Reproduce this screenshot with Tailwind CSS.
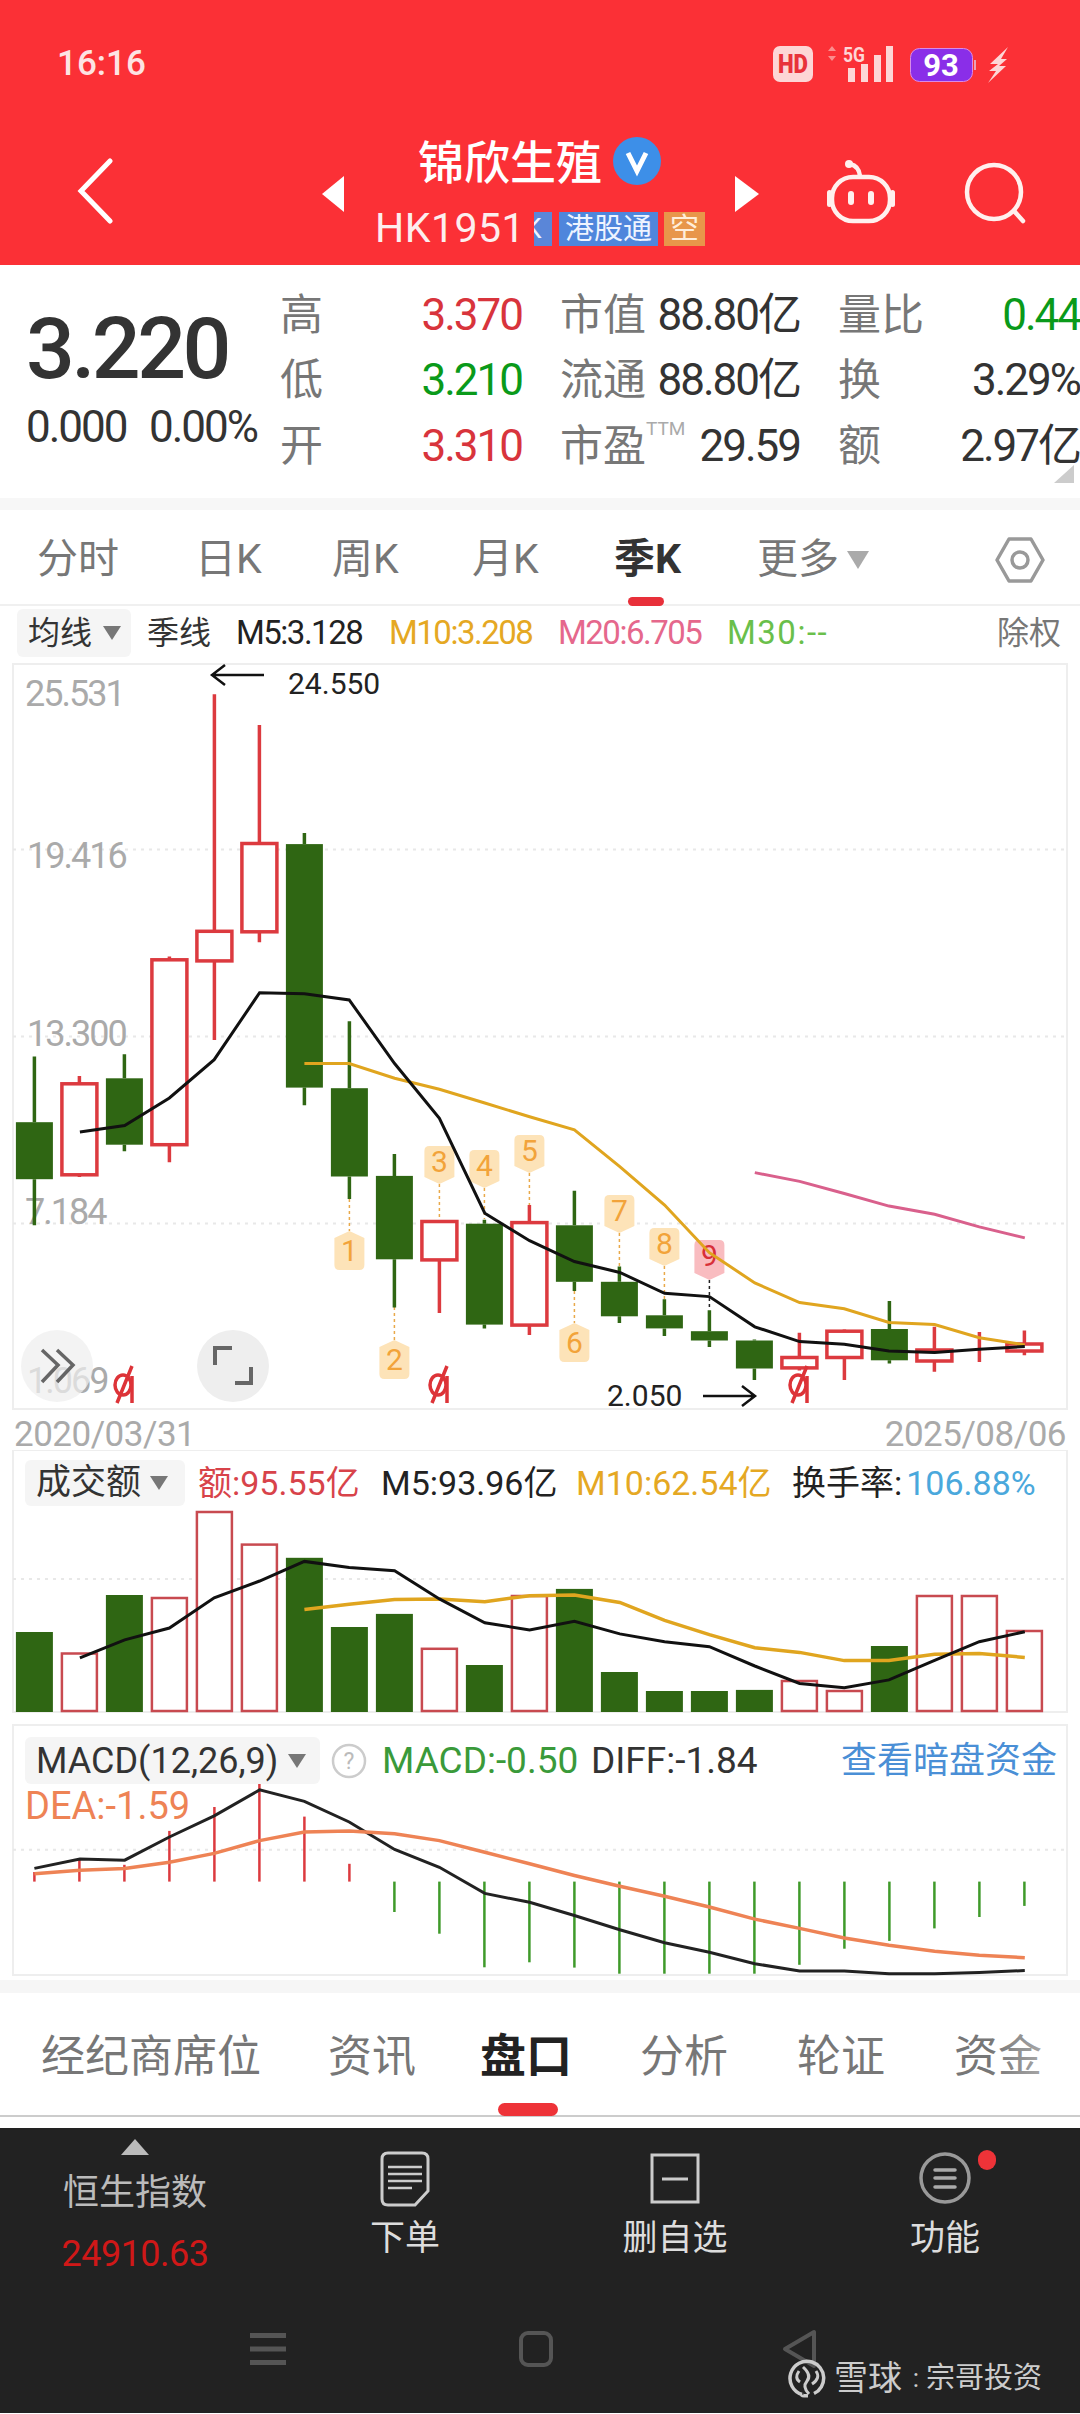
<!DOCTYPE html>
<html lang="en">
<head>
    <meta charset="UTF-8">
    <title>锦欣生殖 HK1951</title>
    <script src="https://cdn.jsdelivr.net/npm/@tailwindcss/browser@4"></script>
</head>
<body class="w-[1080px] h-[2414px] overflow-hidden bg-white text-[#333] font-['Roboto','Noto_Sans_CJK_SC',sans-serif]">

    <!-- Red header -->
    <header class="h-[265px] bg-[#fb3036] text-white">
        <div class="h-[128px] flex items-center">
            <span class="ml-[57px] text-[35px] font-medium text-[#fde3e3]">16:16</span>
            <svg class="ml-auto mr-[67px]" width="240" height="48" viewBox="773 40 240 48">
                <rect x="773" y="46" width="40" height="36" rx="7" fill="#fdd6d6"/>
                <text x="793" y="73" text-anchor="middle" font-size="25" font-weight="900" fill="#e8323a" textLength="30" lengthAdjust="spacingAndGlyphs">HD</text>
                <path d="M832 46l4 5h-8zM832 61l4-5h-8z" fill="#fb8d8d"/>
                <text x="843" y="62" font-size="21" font-weight="700" fill="#fdd6d6" textLength="22" lengthAdjust="spacingAndGlyphs">5G</text>
                <path d="M848 68h7v14h-7zM861 64h7v18h-7zM874 55h7v27h-7zM886 46h7v36h-7z" fill="#fdd6d6"/>
                <rect x="910.5" y="48.5" width="62" height="33" rx="9" fill="#8a2ee8" stroke="#d98ae8"/>
                <path d="M974 60h2v10h-2z" fill="#e8a0b8"/>
                <text x="941" y="76" text-anchor="middle" font-size="31" font-weight="700" fill="#fff">93</text>
                <path d="M1008 47L990 64h8l-9 7h7l-8 12 18-17h-7l8-7h-6z" fill="#fdd6d6"/>
            </svg>
        </div>
        <div class="flex items-start">
            <svg class="ml-[76px] mt-[30px]" width="40" height="66" viewBox="0 0 40 66" fill="none" stroke="#fff" stroke-width="5" stroke-linecap="round">
                <path d="M34 3L5 33l29 30"/>
            </svg>
            <svg class="ml-[206px] mt-[48px]" width="22" height="36" viewBox="0 0 22 36"><path d="M22 0v36L0 18z" fill="#fff"/></svg>
            <div class="w-[391px]">
                <div class="ml-[74px] mt-[10px] h-[50px] flex items-center">
                    <span class="text-[46px] leading-[50px] font-medium">锦欣生殖</span>
                    <svg class="ml-[11px] -mt-[4px]" width="48" height="48" viewBox="0 0 48 48">
                        <circle cx="24" cy="24" r="24" fill="#3d8fe8"/>
                        <path d="M15 16l9 18 9-18" fill="none" stroke="#fff" stroke-width="5"/>
                    </svg>
                </div>
                <div class="ml-[31px] mt-[24px] h-[34px] flex items-center">
                    <span class="w-[159px] text-[41px] tracking-[0.5px] text-[#fdeeee]">HK1951</span>
                    <span class="w-[18px] h-[34px] overflow-hidden bg-[#5a86d8] text-[28px] leading-[34px] text-[#eef4ff]"><span class="-ml-[10px] block">K</span></span>
                    <span class="ml-[7px] w-[99px] h-[34px] bg-[#4f86dc] text-[29px] leading-[34px] text-center text-[#eef4ff]">港股通</span>
                    <span class="ml-[6px] w-[41px] h-[34px] bg-[#e8964a] text-[29px] leading-[34px] text-center text-[#ffeeda]">空</span>
                </div>
            </div>
            <svg class="mt-[48px]" width="24" height="36" viewBox="0 0 24 36"><path d="M0 0v36l24-18z" fill="#fff"/></svg>
            <svg class="ml-[67px] mt-[32px]" width="72" height="65" viewBox="826 160 72 65" fill="none" stroke="#fff0ee" stroke-width="4.5">
                <circle cx="849" cy="164" r="4" fill="#fff0ee" stroke="none"/>
                <path d="M850 164q9 2 10 12"/>
                <rect x="832" y="177" width="58" height="44" rx="21"/>
                <rect x="827" y="190" width="5" height="17" rx="2.5" fill="#fff0ee" stroke="none"/>
                <rect x="890" y="190" width="5" height="17" rx="2.5" fill="#fff0ee" stroke="none"/>
                <rect x="848" y="191" width="6" height="14" rx="3" fill="#fff0ee" stroke="none"/>
                <rect x="868" y="191" width="6" height="14" rx="3" fill="#fff0ee" stroke="none"/>
            </svg>
            <svg class="ml-[64px] mt-[32px]" width="68" height="65" viewBox="962 160 68 65" fill="none" stroke="#fff0ee" stroke-width="4.5">
                <circle cx="994" cy="192" r="27"/>
                <path d="M1014 211l9 10" stroke-linecap="round"/>
            </svg>
        </div>
    </header>

    <!-- Quote summary -->
    <section class="relative h-[233px] flex">
        <div class="w-[280px] pl-[26px] pt-[43px]">
            <div class="text-[86px] leading-[82px] font-medium tracking-[-3.5px] text-[#333]">3.220</div>
            <div class="mt-[14px] flex text-[44px] leading-[46px] tracking-[-2px] text-[#333]">
                <span class="w-[123px]">0.000</span><span>0.00%</span>
            </div>
        </div>
        <div class="pt-[17px] grid grid-cols-[242px_240px_242px] gap-x-[38px] auto-rows-[65.5px] items-center text-[44px] tracking-[-2px]">
            <div class="flex justify-between items-center"><span class="text-[43px] tracking-normal text-[#777]">高</span><span class="text-[#d8343c]">3.370</span></div>
            <div class="flex justify-between items-center"><span class="text-[43px] tracking-normal text-[#777]">市值</span><span>88.80亿</span></div>
            <div class="flex justify-between items-center"><span class="text-[43px] tracking-normal text-[#777]">量比</span><span class="text-[#0a9a1a]">0.44</span></div>
            <div class="flex justify-between items-center"><span class="text-[43px] tracking-normal text-[#777]">低</span><span class="text-[#0a9a1a]">3.210</span></div>
            <div class="flex justify-between items-center"><span class="text-[43px] tracking-normal text-[#777]">流通</span><span>88.80亿</span></div>
            <div class="flex justify-between items-center"><span class="text-[43px] tracking-normal text-[#777]">换</span><span>3.29%</span></div>
            <div class="flex justify-between items-center"><span class="text-[43px] tracking-normal text-[#777]">开</span><span class="text-[#d8343c]">3.310</span></div>
            <div class="flex justify-between items-center"><span class="text-[43px] tracking-normal text-[#777]">市盈<sup class="text-[19px] tracking-normal text-[#aaa] align-[16px]">TTM</sup></span><span>29.59</span></div>
            <div class="flex justify-between items-center"><span class="text-[43px] tracking-normal text-[#777]">额</span><span>2.97亿</span></div>
        </div>
        <svg class="absolute left-[1054px] top-[200px]" width="20" height="18" viewBox="0 0 20 18"><path d="M20 0v18H0z" fill="#ccc"/></svg>
    </section>
    <div class="h-[12px] bg-[#f7f7f7]"></div>

    <!-- Period tabs -->
    <nav class="relative h-[96px] flex items-center pt-[6px] pl-[37px] text-[41px] text-[#777] border-b-2 border-[#f0f0f0]">
        <span class="w-[158px]">分时</span>
        <span class="w-[137px]">日K</span>
        <span class="w-[140px]">周K</span>
        <span class="w-[142px]">月K</span>
        <span class="w-[143px] font-bold text-[#333]">季K</span>
        <span>更多</span>
        <svg class="ml-[8px]" width="22" height="18" viewBox="0 0 22 18"><path d="M0 0h22L11 18z" fill="#aaa"/></svg>
        <svg class="ml-[126px]" width="50" height="48" viewBox="0 0 50 48" fill="none" stroke="#999" stroke-width="3.5">
            <path d="M14 3h22l12 21-12 21H14L2 24z" stroke-linejoin="round"/>
            <circle cx="25" cy="24" r="8"/>
        </svg>
        <div class="absolute left-[628px] top-[87px] w-[36px] h-[9px] rounded-full bg-[#e8303a]"></div>
    </nav>

    <!-- K line toolbar -->
    <div class="h-[54px] flex items-center pl-[17px] whitespace-nowrap text-[33px] tracking-[-1.5px]">
        <div class="w-[114px] h-[48px] shrink-0 rounded-[6px] bg-[#f5f5f5] flex items-center pl-[11px] text-[32px] tracking-normal">
            均线<svg class="ml-[11px]" width="18" height="14" viewBox="0 0 18 14"><path d="M0 0h18L9 14z" fill="#777"/></svg>
        </div>
        <span class="ml-[16px] w-[63px] shrink-0 text-[32px] tracking-normal">季线</span>
        <span class="ml-[26px] w-[153px] shrink-0 text-[#222]">M5:3.128</span>
        <span class="w-[169px] shrink-0 text-[#e5a823]">M10:3.208</span>
        <span class="w-[169px] shrink-0 text-[#e5688c]">M20:6.705</span>
        <span class="w-[270px] shrink-0 tracking-[1.5px] text-[#6abf4b]">M30:--</span>
        <span class="text-[32px] tracking-normal text-[#777]">除权</span>
    </div>

    <!-- K line chart -->
    <svg id="kChart" class="block tracking-[-2px]" width="1080" height="752" viewBox="0 660 1080 752" fill="none">
        <rect x="13" y="664" width="1054" height="745" stroke="#eee" stroke-width="2"/>
        <path d="M13 849.6H1066M13 1036.6H1066M13 1223.6H1066" stroke="#e8e8e8" stroke-width="2" stroke-dasharray="3 5"/>
        <g fill="#aaa" font-size="36">
            <text x="25" y="706">25.531</text>
            <text x="27" y="868">19.416</text>
            <text x="27" y="1046">13.300</text>
            <text x="25" y="1224">7.184</text>
            <text x="27" y="1393">1.069</text>
        </g>
        <g id="kLeaders"></g>
        <g id="kBars"></g>
        <g id="kTags"></g>
        <polyline stroke="#e0a51f" stroke-width="3" points="304.4,1063.5 349.2,1063.5 394.6,1078.3 439.4,1089.3 484.8,1103 529.6,1116.7 574.4,1129.9 619.8,1166.6 664.6,1205 709.4,1252.7 754.8,1282.9 799.6,1302.6 844.3,1308.7 889,1322.4 934.6,1324.6 979.3,1337.8 1024.8,1344.9"/>
        <polyline stroke="#111" stroke-width="3" points="79.9,1132 124.7,1125.5 169.4,1098 214.2,1059.7 259.6,992.7 304.4,993.8 349.2,999.9 394.6,1063.5 439.4,1118.3 484.8,1213.2 529.6,1240.7 574.4,1261.5 619.8,1272.5 664.6,1293.3 709.4,1296.6 754.8,1326.8 799.6,1341.6 844.3,1344.3 889,1350.9 934.6,1352.5 979.3,1349.3 1024.8,1346.5"/>
        <polyline stroke="#d9608c" stroke-width="3" points="754.8,1172.6 799.6,1181.4 844.3,1193.5 889,1206.1 934.6,1214.3 979.3,1226.9 1024.8,1237.9"/>
        <g id="kMarks" stroke="#dd3338" stroke-width="3.5"></g>
        <path d="M212 675h52M225 665l-13 10 13 10" stroke="#111" stroke-width="2.5"/>
        <text x="288" y="694" font-size="30" fill="#222" class="tracking-normal">24.550</text>
        <text x="607" y="1406" font-size="30" fill="#222" class="tracking-normal">2.050</text>
        <path d="M703 1396h52M742 1386l13 10-13 10" stroke="#111" stroke-width="2.5"/>
        <circle cx="57" cy="1366" r="36" fill="#eee" fill-opacity=".72"/>
        <path d="M42 1350l16 15-16 17M57 1350l16 15-16 17" stroke="#666" stroke-width="3.5"/>
        <circle cx="233" cy="1366" r="36" fill="#eee"/>
        <path d="M215 1365v-17h17M235 1383h16v-16" stroke="#666" stroke-width="4"/>
    </svg>

    <div class="h-[38px] pt-[8px] flex justify-between pl-[14px] pr-[14px] text-[35px] leading-[30px] tracking-[-0.5px] text-[#aaa]">
        <span>2020/03/31</span><span>2025/08/06</span>
    </div>

    <!-- Volume chart -->
    <section class="relative h-[270px]">
        <svg id="volChart" class="block" width="1080" height="270" viewBox="0 1450 1080 270" fill="none">
            <rect x="13" y="1450" width="1054" height="262" stroke="#eee" stroke-width="2"/>
            <path d="M13 1579H1066" stroke="#e8e8e8" stroke-width="2" stroke-dasharray="3 5"/>
            <g id="volBars"></g>
            <polyline stroke="#e0a51f" stroke-width="3.5" points="304.4,1609.6 349.2,1604.2 394.6,1599.6 439.4,1598.9 484.8,1601.7 529.6,1595.7 574.4,1594.9 619.8,1602.4 664.6,1620.3 709.4,1634.6 754.8,1647.8 799.6,1652.4 844.3,1660.6 889,1660.6 934.6,1654.2 979.3,1653.5 1024.8,1657.4"/>
            <polyline stroke="#111" stroke-width="3" points="79.9,1657.8 124.7,1639.9 169.4,1628 214.2,1597.8 259.6,1581 304.4,1561.4 349.2,1567.4 394.6,1570.7 439.4,1598.9 484.8,1622.8 529.6,1629.9 574.4,1621.4 619.8,1633.9 664.6,1641.7 709.4,1646.7 754.8,1666 799.6,1683.5 844.3,1687.8 889,1679.9 934.6,1660.3 979.3,1641.7 1024.8,1631.7"/>
        </svg>
        <div class="absolute left-[25px] top-[10px] flex items-center h-[46px] whitespace-nowrap text-[34px]">
            <div class="w-[160px] h-[46px] shrink-0 rounded-[6px] bg-[#f5f5f5] flex items-center pl-[11px] text-[35px]">
                成交额<svg class="ml-[9px]" width="18" height="14" viewBox="0 0 18 14"><path d="M0 0h18L9 14z" fill="#777"/></svg>
            </div>
            <span class="ml-[13px] w-[183px] shrink-0 text-[#d8434a]">额:95.55亿</span>
            <span class="w-[195px] shrink-0 text-[#222]">M5:93.96亿</span>
            <span class="w-[216px] shrink-0 text-[#e5a823]">M10:62.54亿</span>
            <span class="text-[#222]">换手率:</span><span class="ml-[4px] text-[#4aa8dc]">106.88%</span>
        </div>
    </section>

    <!-- MACD chart -->
    <section class="relative h-[260px]">
        <svg id="macdChart" class="block" width="1080" height="260" viewBox="0 1720 1080 260" fill="none">
            <rect x="13" y="1725" width="1054" height="250" stroke="#eee" stroke-width="2"/>
            <path d="M13 1849.8H1066" stroke="#e8e8e8" stroke-width="2" stroke-dasharray="3 5"/>
            <g id="macdBars" stroke-width="2.5"></g>
            <polyline stroke="#222" stroke-width="3" points="34.4,1868.4 79.9,1859.1 124.7,1860.2 169.4,1837 214.2,1815.9 259.6,1789.9 304.4,1801.3 349.2,1822 394.6,1849.5 439.4,1867.3 484.8,1893.4 529.6,1902.3 574.4,1915.5 619.8,1929.8 664.6,1942.7 709.4,1952.3 754.8,1963.7 799.6,1970.9 844.3,1970.9 889,1973.7 934.6,1973.7 979.3,1972.6 1024.8,1970.5"/>
            <polyline stroke="#ee8355" stroke-width="3.5" points="34.4,1873.8 79.9,1870.2 124.7,1868.4 169.4,1862.3 214.2,1853.4 259.6,1840.6 304.4,1832 349.2,1830.9 394.6,1833.8 439.4,1840.6 484.8,1852.3 529.6,1863.8 574.4,1875.5 619.8,1886.3 664.6,1896.2 709.4,1907 754.8,1919.1 799.6,1928.4 844.3,1938 889,1945.2 934.6,1951.2 979.3,1955.2 1024.8,1957.7"/>
        </svg>
        <div class="absolute left-[25px] top-[17px] w-[1035px] h-[47px] flex items-center whitespace-nowrap text-[37px]">
            <div class="w-[295px] h-[47px] shrink-0 rounded-[6px] bg-[#f5f5f5] flex items-center pl-[11px] text-[36px]">
                MACD(12,26,9)<svg class="ml-[10px]" width="18" height="14" viewBox="0 0 18 14"><path d="M0 0h18L9 14z" fill="#777"/></svg>
            </div>
            <svg class="ml-[11px] shrink-0" width="36" height="36" viewBox="0 0 36 36" fill="none">
                <circle cx="18" cy="18" r="16" stroke="#ccc" stroke-width="2.5"/>
                <text x="18" y="26" text-anchor="middle" font-size="23" fill="#bbb">?</text>
            </svg>
            <span class="ml-[15px] w-[209px] shrink-0 text-[#3a9a3a]">MACD:-0.50</span>
            <span class="w-[250px] shrink-0 text-[#333]">DIFF:-1.84</span>
            <span class="text-[36px] text-[#4a8fd6]">查看暗盘资金</span>
        </div>
        <span class="absolute left-[25px] top-[58px] text-[38px] text-[#ee8355]">DEA:-1.59</span>
    </section>

    <div class="h-[13px] bg-[#f6f6f6]"></div>

    <!-- Detail tabs -->
    <nav class="relative h-[124px] flex items-center pt-[5px] pl-[41px] text-[44px] text-[#777] border-b-2 border-[#ccc]">
        <span class="w-[287px]">经纪商席位</span>
        <span class="w-[152px]">资讯</span>
        <span class="w-[160px] text-[46px] font-bold text-[#222]">盘口</span>
        <span class="w-[157px]">分析</span>
        <span class="w-[157px]">轮证</span>
        <span>资金</span>
        <div class="absolute right-0 top-0 w-[90px] h-full bg-linear-to-r from-transparent to-white/60"></div>
        <div class="absolute left-[498px] top-[110px] w-[60px] h-[13px] rounded-full bg-[#ee3338]"></div>
    </nav>
    <div class="h-[11px] bg-white"></div>

    <!-- Dark footer -->
    <footer class="relative h-[285px] bg-[#222]">
        <div class="h-[190px] grid grid-cols-4">
            <div class="flex flex-col items-center pt-[11px]">
                <svg width="28" height="16" viewBox="0 0 28 16"><path d="M14 0l14 16H0z" fill="#bbb"/></svg>
                <span class="mt-[14px] text-[36px] leading-[48px] text-[#bbb]">恒生指数</span>
                <span class="mt-[13px] text-[36px] leading-[48px] tracking-[-0.5px] text-[#d01818]">24910.63</span>
            </div>
            <div class="flex flex-col items-center pt-[23px]">
                <svg width="50" height="56" viewBox="0 0 50 56" fill="none" stroke="#ccc" stroke-width="3">
                    <path d="M8 2h34q6 0 6 6v32L35 54H8q-6 0-6-6V8q0-6 6-6z"/>
                    <path d="M8 16h34M8 23h34M8 30h34M8 37h24" stroke-width="2.5"/>
                </svg>
                <span class="mt-[10px] text-[35px] leading-[44px] text-[#ddd]">下单</span>
            </div>
            <div class="flex flex-col items-center pt-[23px]">
                <svg width="50" height="56" viewBox="0 0 50 56" fill="none" stroke="#ccc" stroke-width="3">
                    <path d="M2 4h46v47H2z"/>
                    <path d="M12 28h26" stroke-width="3"/>
                </svg>
                <span class="mt-[10px] text-[35px] leading-[44px] text-[#ddd]">删自选</span>
            </div>
            <div class="flex flex-col items-center pt-[23px]">
                <div class="relative">
                    <svg width="54" height="56" viewBox="0 0 54 56" fill="none" stroke="#999" stroke-width="3.5">
                        <circle cx="27" cy="27" r="24"/>
                        <path d="M17 19h20M17 27h20M17 36h20" stroke="#aaa" stroke-linecap="round"/>
                    </svg>
                    <div class="absolute left-[60px] -top-[1px] w-[18px] h-[20px] rounded-full bg-[#ee3338]"></div>
                </div>
                <span class="mt-[10px] text-[35px] leading-[44px] text-[#ddd]">功能</span>
            </div>
        </div>
        <div class="h-[40px] mt-[11px] flex items-center">
            <svg class="ml-[250px]" width="36" height="36" viewBox="0 0 36 36"><path d="M0 2h36v5H0zM0 15.500h36v5H0zM0 29h36v5H0z" fill="#555"/></svg>
            <svg class="ml-[233px]" width="34" height="36" viewBox="0 0 34 36" fill="none"><rect x="2" y="2" width="30" height="32" rx="7" stroke="#555" stroke-width="4"/></svg>
            <svg class="ml-[229px]" width="36" height="40" viewBox="0 0 36 40" fill="none"><path d="M32 3v34L3 20z" stroke="#555" stroke-width="4" stroke-linejoin="round"/></svg>
        </div>
        <div class="absolute left-[788px] top-[230px] flex items-center text-[#ccc]">
            <svg width="38" height="40" viewBox="0 0 38 40" fill="none" stroke="#ccc" stroke-width="3.5">
                <path d="M24 4A17 17 0 0 0 14 36.500M14 36q-2 2 6 1.800M26 35.500A17 17 0 0 0 24 4"/>
                <path d="M11 13q-5 7 1 11M15 9q9 8 4 14t2 13M28 13q5 7-4 13" stroke-width="3"/>
            </svg>
            <span class="ml-[8px] text-[34px] leading-[38px]">雪球</span>
            <span class="ml-[4px] w-[20px] text-[26px] leading-[38px] text-center">:</span>
            <span class="text-[29px] leading-[38px]">宗哥投资</span>
        </div>
    </footer>

    <script>
        const GREEN = '#2f6613';
        const RED = '#dc3a3f';
        const xAt = i => 34.4 + 45 * i;

        // [high, top, bottom, low, isRed]
        const candles = [
            [1056.4, 1122.2, 1179.2, 1225.3, 0],
            [1076.1, 1083.8, 1174.8, 1177, 1],
            [1054.2, 1078.3, 1144.7, 1151.2, 0],
            [956.5, 959.8, 1144.7, 1162.2, 1],
            [694.3, 931.3, 960.9, 1039.9, 1],
            [725, 843.5, 931.8, 942.3, 1],
            [833.1, 844.1, 1087.6, 1105.2, 0],
            [1021.3, 1088.2, 1176.5, 1199, 0],
            [1154, 1175.9, 1259.3, 1307.6, 0],
            [1221.5, 1221.5, 1259.9, 1313, 1],
            [1219.8, 1223.7, 1324.6, 1328.4, 0],
            [1205, 1222.6, 1325.1, 1335, 1],
            [1190.8, 1225.3, 1281.8, 1291, 0],
            [1266.4, 1281.8, 1316.3, 1323, 0],
            [1299.3, 1315.3, 1328.4, 1336.1, 0],
            [1310.3, 1331.2, 1340.5, 1347, 0],
            [1339.4, 1340.5, 1368.5, 1380, 0],
            [1332.8, 1357.5, 1367.9, 1370.6, 1],
            [1329.5, 1331.2, 1357.5, 1380, 1],
            [1301, 1329, 1360.3, 1363.5, 0],
            [1326.8, 1350, 1361, 1371.8, 1],
            [1332, 1347, 1347, 1362, 1],
            [1330.6, 1344, 1351, 1355.3, 1]
        ];

        document.getElementById('kBars').innerHTML = candles.map(([high, top, bottom, low, up], i) => {
            const x = xAt(i);
            const color = up ? RED : GREEN;
            const wick = `<path d="M${x} ${high}V${top}M${x} ${bottom}V${low}" stroke="${color}" stroke-width="3.5"/>`;
            if (top === bottom) return wick;
            const body = up
                ? `<rect x="${x - 17.5}" y="${top}" width="35" height="${bottom - top}" fill="#fff" stroke="${color}" stroke-width="3.5"/>`
                : `<rect x="${x - 18.5}" y="${top}" width="37" height="${bottom - top}" fill="${color}"/>`;
            return wick + body;
        }).join('');

        // TD sequence tags: [candle, label, tag top, tag bottom, leader from, leader to, points down]
        const tags = [
            [7, '1', 1231, 1270, 1199, 1231, 0],
            [8, '2', 1340, 1379, 1307, 1340, 0],
            [9, '3', 1146, 1184, 1184, 1221, 1],
            [10, '4', 1150, 1188, 1188, 1219, 1],
            [11, '5', 1135, 1173, 1173, 1205, 1],
            [12, '6', 1323, 1362, 1291, 1323, 0],
            [13, '7', 1195, 1233, 1233, 1266, 1],
            [14, '8', 1228, 1266, 1266, 1299, 1],
            [15, '9', 1240, 1280, 1280, 1310, 1]
        ];

        document.getElementById('kLeaders').innerHTML = tags.map(([i, , , , from, to]) =>
            `<path d="M${xAt(i)} ${from}V${to}" stroke="${i === 15 ? '#222' : '#e9a94a'}" stroke-width="1.5" stroke-dasharray="3 3"/>`
        ).join('');

        document.getElementById('kTags').innerHTML = tags.map(([i, label, top, bottom, , , down]) => {
            const x = xAt(i);
            const l = x - 15, r = x + 15;
            const shape = down
                ? `M${l} ${top + 5}q0-5 5-5h20q5 0 5 5V${bottom - 7}L${x} ${bottom}L${l} ${bottom - 7}z`
                : `M${l} ${top + 7}L${x} ${top}L${r} ${top + 7}V${bottom - 5}q0 5-5 5h-20q-5 0-5-5z`;
            const fill = i === 15 ? '#f9bcc0' : '#fde3b8';
            const ink = i === 15 ? '#d83038' : '#f2a33a';
            const textY = down ? top + 26 : top + 30;
            return `<path d="${shape}" fill="${fill}"/><text x="${x}" y="${textY}" text-anchor="middle" font-size="30" letter-spacing="0" fill="${ink}">${label}</text>`;
        }).join('');

        document.getElementById('kMarks').innerHTML = [123, 438, 798].map(x =>
            `<ellipse cx="${x}" cy="1385" rx="8" ry="10"/><path d="M${x + 9} 1366L${x - 6} 1403M${x + 9} 1376V1403"/>`
        ).join('');

        // Volume bar tops, bottom edge is 1712
        const volumes = [
            [1632, 0], [1653.5, 1], [1595, 0], [1598, 1], [1512, 1], [1544.6, 1], [1557.8, 0], [1627, 0],
            [1613.9, 0], [1648.8, 1], [1665, 0], [1596, 1], [1588.9, 0], [1672, 0], [1691, 0], [1691, 0],
            [1689.9, 0], [1681, 1], [1691, 1], [1646, 0], [1596, 1], [1596, 1], [1631, 1]
        ];

        document.getElementById('volBars').innerHTML = volumes.map(([top, up], i) => {
            const x = xAt(i);
            return up
                ? `<rect x="${x - 17.5}" y="${top}" width="35" height="${1711 - top}" fill="#fff" stroke="#c84a50" stroke-width="2.5"/>`
                : `<rect x="${x - 18.5}" y="${top}" width="37" height="${1712 - top}" fill="${GREEN}"/>`;
        }).join('');

        // MACD sticks, zero line is 1881.6
        const macd = [
            1872, 1859.5, 1864.8, 1830.9, 1807, 1779, 1816.6, 1863.8,
            1912, 1933.7, 1967.3, 1962.3, 1967.6, 1973.7, 1973.7, 1973.7, 1973.7,
            1964.8, 1948.7, 1940.9, 1928.4, 1917, 1905.9
        ];

        document.getElementById('macdBars').innerHTML = macd.map((y, i) => {
            const color = i < 8 ? '#dc3a3f' : '#3f9a2a';
            return `<path d="M${xAt(i)} 1881.6V${y}" stroke="${color}"/>`;
        }).join('');
    </script>
</body>
</html>
